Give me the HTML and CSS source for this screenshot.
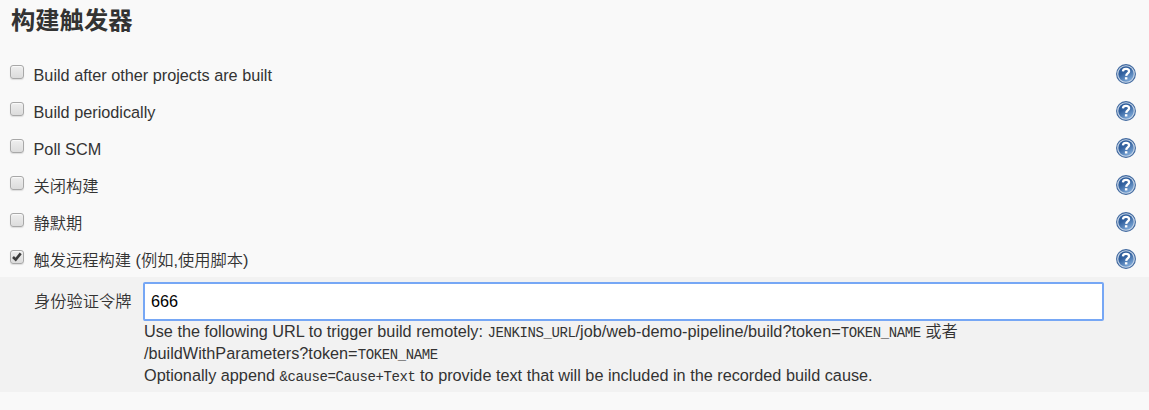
FILE: index.html
```html
<!DOCTYPE html>
<html lang="zh-CN">
<head>
<meta charset="utf-8">
<title>构建触发器</title>
<link rel="stylesheet" href="styles.css">
</head>
<body>
<svg class="defs" width="0" height="0" aria-hidden="true">
  <defs>
    <linearGradient id="ball" x1="0" y1="0" x2="0.6" y2="1">
      <stop offset="0" stop-color="#2d5c9b"/>
      <stop offset="0.45" stop-color="#31609e"/>
      <stop offset="1" stop-color="#7ba6d6"/>
    </linearGradient>
    <symbol id="help" viewBox="0 0 20 20">
      <circle cx="10" cy="10" r="9.4" fill="#c9d7e8" stroke="#426aa0" stroke-width="1.1"/>
      <circle cx="10" cy="10" r="7.7" fill="url(#ball)"/>
      <path d="M6.9 7.3C7.1 5.5 8.3 4.9 10 4.9c1.9 0 3.1.9 3.1 2.4 0 2.1-2.7 2.2-2.9 4.5" fill="none" stroke="#fff" stroke-width="2.3"/>
      <rect x="8.9" y="13.2" width="2.5" height="2.3" fill="#fff"/>
    </symbol>
  </defs>
</svg>
<main>
  <h1 class="title">构建触发器</h1>
  <div class="row"><span class="check"></span><label class="name">Build after other projects are built</label><svg class="help"><use href="#help"/></svg></div>
  <div class="row"><span class="check"></span><label class="name">Build periodically</label><svg class="help"><use href="#help"/></svg></div>
  <div class="row"><span class="check"></span><label class="name">Poll SCM</label><svg class="help"><use href="#help"/></svg></div>
  <div class="row"><span class="check"></span><label class="name">关闭构建</label><svg class="help"><use href="#help"/></svg></div>
  <div class="row"><span class="check"></span><label class="name">静默期</label><svg class="help"><use href="#help"/></svg></div>
  <div class="row"><span class="check"><svg class="tick" viewBox="0 0 12 12"><path d="M2 6l2.7 2.6L9.7 2.4" fill="none" stroke="#3c3c3c" stroke-width="2.6"/></svg></span><label class="name">触发远程构建 (例如,使用脚本)</label><svg class="help"><use href="#help"/></svg></div>
  <section class="panel">
    <label class="token-label" for="token">身份验证令牌</label>
    <div class="field">
      <input class="token" id="token" type="text" value="666">
      <div class="hint">Use the following URL to trigger build remotely: <code>JENKINS_URL</code>/job/web-demo-pipeline/build?token=<code>TOKEN_NAME</code> 或者</div>
      <div class="hint">/buildWithParameters?token=<code>TOKEN_NAME</code></div>
      <div class="hint">Optionally append <code>&amp;cause=Cause+Text</code> to provide text that will be included in the recorded build cause.</div>
    </div>
  </section>
</main>
</body>
</html>
```
FILE: styles.css
```css
* { box-sizing: border-box; }
body {
  margin: 0;
  background: #f9f9f9;
  color: #333;
  font: 350 16.25px/22px "Liberation Sans", "Noto Sans CJK SC DemiLight", "Noto Sans CJK SC", sans-serif;
}
.defs { display: block; width: 0; height: 0; }
.title {
  height: 55px;
  margin: 0;
  padding: 4px 0 0 11px;
  font-family: "Noto Sans CJK SC", sans-serif;
  font-size: 24.3px;
  line-height: 30px;
  font-weight: 700;
}
.row {
  display: flex;
  height: 37px;
  padding: 9px 13px 0 10px;
}
.check {
  width: 14px;
  height: 14px;
  margin: 1px 9.5px 0 0;
  border: 1px solid #a8a8a8;
  border-radius: 3px;
  background: linear-gradient(#eee, #dcdcdc);
  box-shadow: 0 1px 1px #ddd, inset 0 1px 1px #fafafa;
}
.tick { display: block; width: 12px; height: 12px; }
.name { flex: 1; white-space: nowrap; }
.help { width: 20px; height: 20px; }
.panel {
  display: flex;
  height: 115px;
  padding: 5px 45px 0 34px;
  background: #f2f2f2;
}
.token-label { width: 109px; padding-top: 8px; white-space: nowrap; }
.field { flex: 1; }
.token {
  display: block;
  width: 100%;
  height: 39px;
  margin-bottom: -1px;
  padding: 0 6px;
  border: 2px solid #76a7f5;
  border-radius: 2px;
  outline: 0;
  background: #fff;
  color: #000;
  font: inherit;
}
.hint { height: 22px; padding-left: 1px; white-space: nowrap; }
code {
  font-family: "Liberation Mono", monospace;
  font-size: 14px;
  letter-spacing: -0.4px;
  line-height: 1;
}
```
